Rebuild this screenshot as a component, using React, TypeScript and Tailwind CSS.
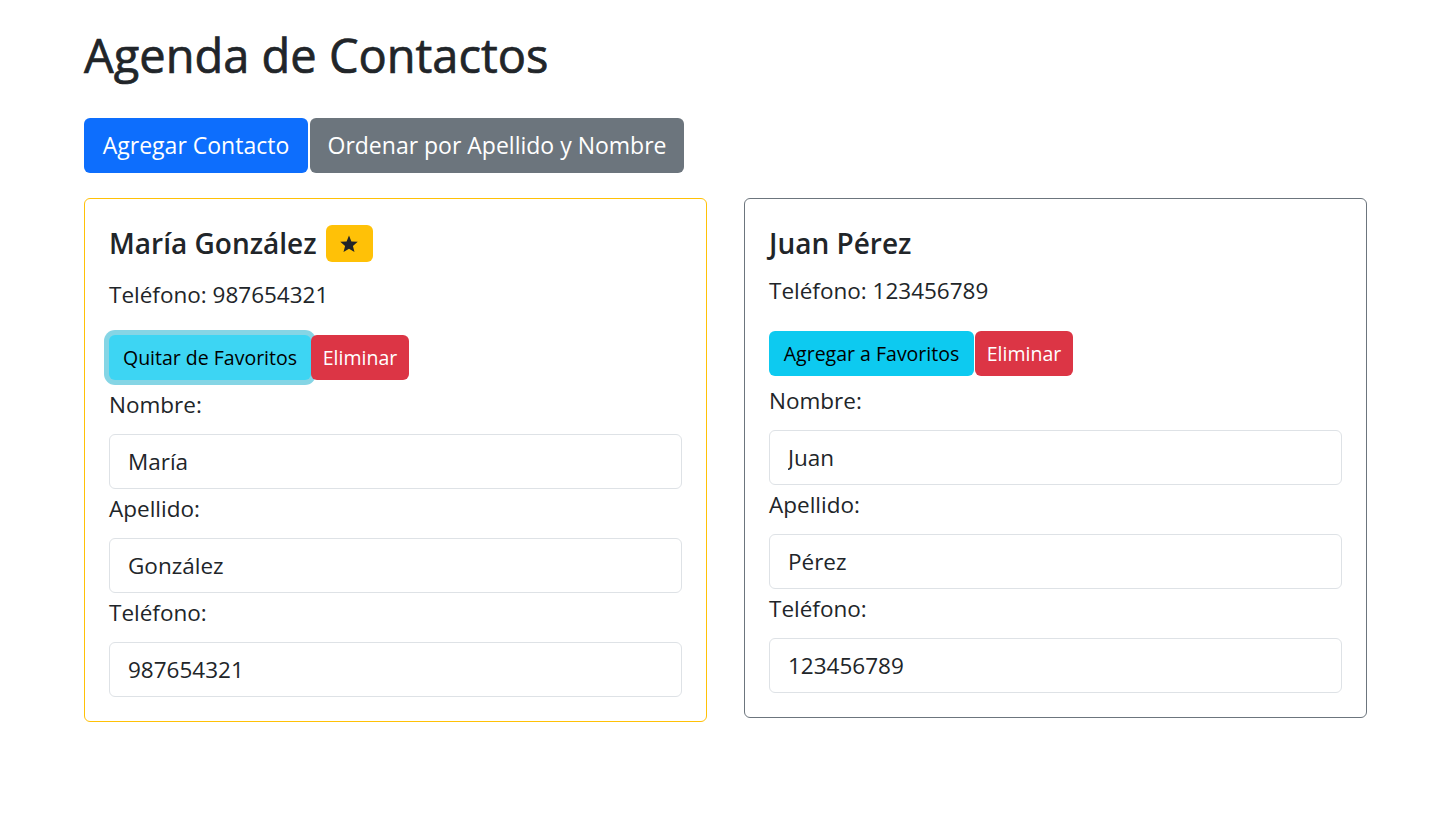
type Contact = {
  id: number;
  nombre: string;
  apellido: string;
  telefono: string;
  favorito: boolean;
};

const contacts: Contact[] = [
  { id: 1, nombre: "María", apellido: "González", telefono: "987654321", favorito: true },
  { id: 2, nombre: "Juan", apellido: "Pérez", telefono: "123456789", favorito: false },
];

function Field({ label, value, first }: { label: string; value: string; first?: boolean }) {
  return (
    <div>
      <label className={`block h-[36px] leading-[36px] ${first ? "mt-[7px]" : "mt-[2px]"}`}>{label}</label>
      <input
        readOnly
        value={value}
        className="mt-[11px] block h-[55px] w-full rounded-md border border-[#dee2e6] bg-white px-[18px] text-[22.5px] text-[#212529] outline-none"
      />
    </div>
  );
}

function ContactCard({ contact }: { contact: Contact }) {
  const fav = contact.favorito;
  return (
    <article
      className={`rounded-md border bg-white px-6 pb-6 pt-6 ${fav ? "border-[#ffc107]" : "border-[#6c757d]"}`}
    >
      <div className={`flex items-start ${fav ? "h-[44px]" : "h-[40px]"}`}>
        <h3 className="h-[40px] text-[28px] font-semibold leading-[40px]">
          {contact.nombre} {contact.apellido}
        </h3>
        {fav ? (
          <span className="ml-[9px] mt-[2px] flex h-[37px] w-[47px] items-center justify-center rounded-md bg-[#ffc107]">
            <svg viewBox="0 0 24 24" className="h-[20px] w-[20px]" fill="#212529">
              <path d="M12 1.8l2.9 7.1 7.6.5-5.8 4.9 1.9 7.4L12 17.6l-6.6 4.1 1.9-7.4-5.8-4.9 7.6-.5z" />
            </svg>
          </span>
        ) : null}
      </div>
      <p className="mt-[10px] h-[36px] leading-[36px]">Teléfono: {contact.telefono}</p>
      <div className="mt-[22px] flex h-[45px]">
        {fav ? (
          <button
            type="button"
            className="h-[45px] w-[202px] rounded-md bg-[#3dd5f3] text-[19.5px] text-black shadow-[0_0_0_5px_rgba(11,172,204,0.5)]"
          >
            Quitar de Favoritos
          </button>
        ) : (
          <button type="button" className="h-[45px] w-[205px] rounded-md bg-[#0dcaf0] text-[19.5px] text-black">
            Agregar a Favoritos
          </button>
        )}
        <button
          type="button"
          className={`h-[45px] w-[98px] rounded-md bg-[#dc3545] text-[19.5px] text-white ${fav ? "" : "ml-px"}`}
        >
          Eliminar
        </button>
      </div>
      <Field label="Nombre:" value={contact.nombre} first />
      <Field label="Apellido:" value={contact.apellido} />
      <Field label="Teléfono:" value={contact.telefono} />
    </article>
  );
}

export default function App() {
  return (
    <main className="min-h-screen bg-white pl-[84px] pt-[27px] font-['Open_Sans',sans-serif] text-[22.5px] text-[#212529]">
      <h1 className="h-[56px] text-[47px] font-medium leading-[56px] [-webkit-text-stroke:0.7px_#212529]">
        Agenda de Contactos
      </h1>
      <div className="mt-[35px] flex gap-[2px]">
        <button type="button" className="h-[55px] w-[224px] rounded-md bg-[#0d6efd] text-[23px] text-white">
          Agregar Contacto
        </button>
        <button type="button" className="h-[55px] w-[374px] rounded-md bg-[#6c757d] text-[23px] text-white">
          Ordenar por Apellido y Nombre
        </button>
      </div>
      <section className="mt-[25px] grid w-[1283px] grid-cols-2 items-start gap-[37px]">
        {contacts.map((c) => (
          <ContactCard key={c.id} contact={c} />
        ))}
      </section>
    </main>
  );
}
